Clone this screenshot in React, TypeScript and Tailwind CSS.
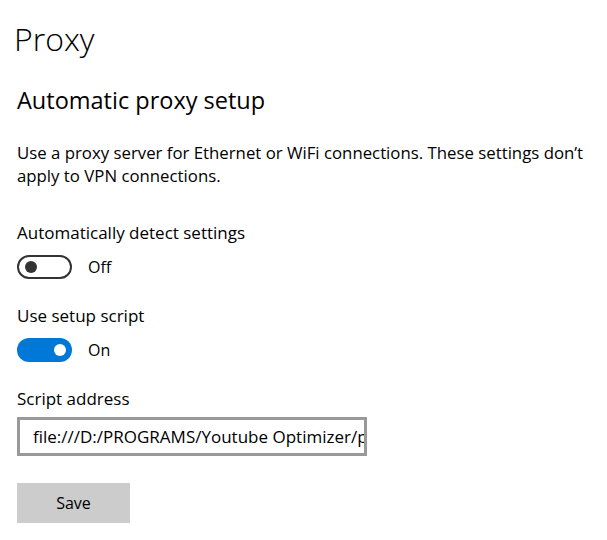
import React from 'react';

const Toggle: React.FC<{ on: boolean; label: string }> = ({ on, label }) => (
  <div className="flex items-center h-[24px]">
    {on ? (
      <div className="w-[55px] h-[24px] rounded-full bg-[#0078d7] flex items-center justify-end pr-[6px]">
        <div className="w-[12px] h-[12px] rounded-full bg-white" />
      </div>
    ) : (
      <div className="w-[55px] h-[24px] rounded-full border-2 border-[#333333] flex items-center pl-[6px]">
        <div className="w-[12px] h-[12px] rounded-full bg-[#333333]" />
      </div>
    )}
    <span className="ml-[16px] text-[16px] text-black">{label}</span>
  </div>
);

export default function App() {
  return (
    <div
      className="w-[607px] h-[540px] bg-white overflow-hidden pl-[17px] pt-[17px] text-black"
      style={{ fontFamily: '"Open Sans", "Noto Sans", sans-serif' }}
    >
      <h1 className="text-[32px] leading-[44px] font-light -ml-[3px]">Proxy</h1>
      <h2 className="mt-[23px] text-[23.5px] leading-[32px] font-normal">Automatic proxy setup</h2>
      <p className="mt-[25px] w-[590px] text-[16.8px] leading-[23px]">
        Use a proxy server for Ethernet or WiFi connections. These settings don’t apply to VPN connections.
      </p>
      <div className="mt-[34px] text-[17px] leading-[23px]">Automatically detect settings</div>
      <div className="mt-[11px]">
        <Toggle on={false} label="Off" />
      </div>
      <div className="mt-[25px] text-[17px] leading-[23px]">Use setup script</div>
      <div className="mt-[11px]">
        <Toggle on={true} label="On" />
      </div>
      <div className="mt-[25px] text-[17px] leading-[23px]">Script address</div>
      <div className="mt-[7px] w-[350px] h-[39px] border-[3px] border-[#999999] bg-white flex items-center pl-[13px] overflow-hidden">
        <span className="whitespace-nowrap text-[17px]">file:///D:/PROGRAMS/Youtube Optimizer/proxy.pac</span>
      </div>
      <button className="mt-[27px] w-[113px] h-[40px] bg-[#cccccc] text-[16px] text-black block">Save</button>
    </div>
  );
}
